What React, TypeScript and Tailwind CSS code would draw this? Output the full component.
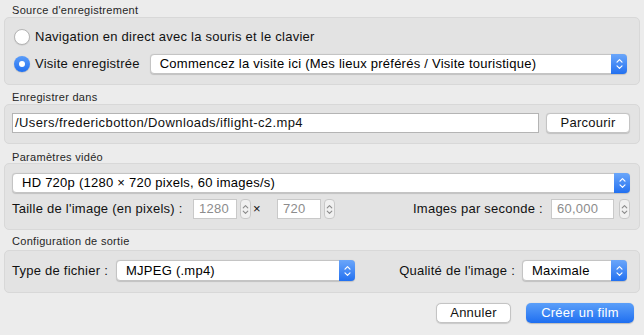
import React from "react";

const font = { fontFamily: '"Liberation Sans", Arial, sans-serif' };

function Title({ text, className }: { text: string; className: string }) {
  return (
    <div className={`pl-[8px] text-[11px] leading-[14px] tracking-[0.3px] text-[#262626] ${className}`}>{text}</div>
  );
}

function Box({ className, children }: { className: string; children: React.ReactNode }) {
  return (
    <div className={`rounded-[5px] border border-[#d8d8d8] bg-[#e3e3e3] ${className}`}>{children}</div>
  );
}

function Chevrons({ color, size = 9 }: { color: string; size?: number }) {
  return (
    <svg width="7" height={size + 3} viewBox="0 0 7 12" fill="none" stroke={color} strokeWidth="1.2" strokeLinecap="round" strokeLinejoin="round">
      <path d="M1 4.2 L3.5 1.7 L6 4.2" />
      <path d="M1 7.8 L3.5 10.3 L6 7.8" />
    </svg>
  );
}

function Popup({ label, className, h = "h-[20px]" }: { label: string; className: string; h?: string }) {
  return (
    <div className={`flex ${h} items-stretch rounded-[4px] border border-[#c4c4c4] bg-white shadow-[0_0.5px_1px_rgba(0,0,0,0.15)] ${className}`}>
      <div className="flex flex-1 items-center truncate pl-[9px] text-[13px] text-black">{label}</div>
      <div className="-my-px -mr-px flex w-[16px] items-center justify-center rounded-r-[4px] bg-gradient-to-b from-[#6aa6fa] to-[#2170f0]">
        <Chevrons color="#ffffff" />
      </div>
    </div>
  );
}

function Stepper({ ml = "ml-[3px]" }: { ml?: string }) {
  return (
    <div className={`${ml} flex h-[20px] w-[11px] items-center justify-center rounded-[4px] border border-[#c8c8c8] bg-[#f0f0f0]`}>
      <Chevrons color="#8a8a8a" size={8} />
    </div>
  );
}

function NumField({ value, w }: { value: string; w: string }) {
  return (
    <div className={`flex h-[20px] ${w} items-center border border-[#c9c9c9] bg-white pl-[5px] text-[13px] text-[#8c8c8c]`}>{value}</div>
  );
}

function Radio({ checked }: { checked?: boolean }) {
  if (checked) {
    return (
      <div className="flex h-[16px] w-[16px] items-center justify-center rounded-full bg-gradient-to-b from-[#5a9cf9] to-[#1f6ff0] shadow-[0_0.5px_1px_rgba(0,0,0,0.25)]">
        <div className="h-[6px] w-[6px] rounded-full bg-white" />
      </div>
    );
  }
  return <div className="h-[16px] w-[16px] rounded-full border border-[#b5b5b5] bg-white shadow-[0_0.5px_1px_rgba(0,0,0,0.12)]" />;
}

export default function App() {
  return (
    <div className="h-[335px] w-[644px] overflow-hidden bg-[#ececec] px-[4px] tracking-[0.25px] text-[#111]" style={font}>
      {/* Source */}
      <Title text="Source d'enregistrement" className="h-[17px] pt-[3px]" />
      <Box className="h-[68px] pl-[9px] pr-[12px] pt-[9px]">
        <div className="flex h-[20px] items-center gap-[5px]">
          <Radio />
          <span className="text-[13px]">Navigation en direct avec la souris et le clavier</span>
        </div>
        <div className="mt-[7px] flex h-[20px] items-center">
          <Radio checked />
          <span className="ml-[5px] text-[13px]">Visite enregistrée</span>
          <Popup label="Commencez la visite ici (Mes lieux préférés / Visite touristique)" className="ml-[10px] flex-1" />
        </div>
      </Box>

      {/* Enregistrer dans */}
      <Title text="Enregistrer dans" className="h-[19px] pt-[5px]" />
      <Box className="flex h-[40px] items-start gap-[7px] pl-[7px] pr-[9px] pt-[8px]">
        <div className="flex h-[20px] flex-1 items-center border border-[#b4b4b4] bg-white pl-[2px] text-[13px] tracking-[0.4px]">
          /Users/fredericbotton/Downloads/iflight-c2.mp4
        </div>
        <div className="flex h-[20px] w-[84px] items-center justify-center rounded-[4px] border border-[#c4c4c4] bg-white text-[13px] shadow-[0_0.5px_1px_rgba(0,0,0,0.15)]">
          Parcourir
        </div>
      </Box>

      {/* Paramètres vidéo */}
      <Title text="Paramètres vidéo" className="h-[19px] pt-[6px]" />
      <Box className="h-[67px] pl-[7px] pr-[9px] pt-[9px]">
        <Popup label="HD 720p (1280 × 720 pixels, 60 images/s)" className="w-full" />
        <div className="mt-[6px] flex h-[20px] items-center text-[13px]">
          <span className="w-[181px]">Taille de l'image (en pixels) :</span>
          <NumField value="1280" w="w-[44px]" />
          <Stepper />
          <span className="ml-[2px] w-[8px] text-center">×</span>
          <NumField value="720" w="w-[44px] ml-[16px]" />
          <Stepper />
          <div className="flex-1" />
          <span className="mr-[8px]">Images par seconde :</span>
          <NumField value="60,000" w="w-[63px]" />
          <Stepper ml="ml-[5px]" />
        </div>
      </Box>

      {/* Configuration de sortie */}
      <Title text="Configuration de sortie" className="h-[20px] pt-[4px]" />
      <Box className="flex h-[43px] items-start pl-[7px] pr-[12px] pt-[9px] text-[13px]">
        <div className="flex h-[21px] w-[104px] items-center">Type de fichier :</div>
        <Popup label="MJPEG (.mp4)" className="w-[239px]" h="h-[21px]" />
        <div className="flex-1" />
        <div className="flex h-[21px] items-center">Qualité de l'image :</div>
        <Popup label="Maximale" className="ml-[7px] w-[105px]" h="h-[21px]" />
      </Box>

      {/* Actions */}
      <div className="mt-[10px] flex justify-end gap-[15px] pr-[6px] text-[13px]">
        <div className="flex h-[20px] w-[75px] items-center justify-center rounded-[5px] border border-[#c4c4c4] bg-white shadow-[0_0.5px_1px_rgba(0,0,0,0.15)]">
          Annuler
        </div>
        <div className="flex h-[20px] w-[108px] items-center justify-center rounded-[5px] bg-gradient-to-b from-[#5b9ff9] to-[#1d6ef0] text-white shadow-[0_0.5px_1px_rgba(0,0,0,0.2)]">
          Créer un film
        </div>
      </div>
    </div>
  );
}
